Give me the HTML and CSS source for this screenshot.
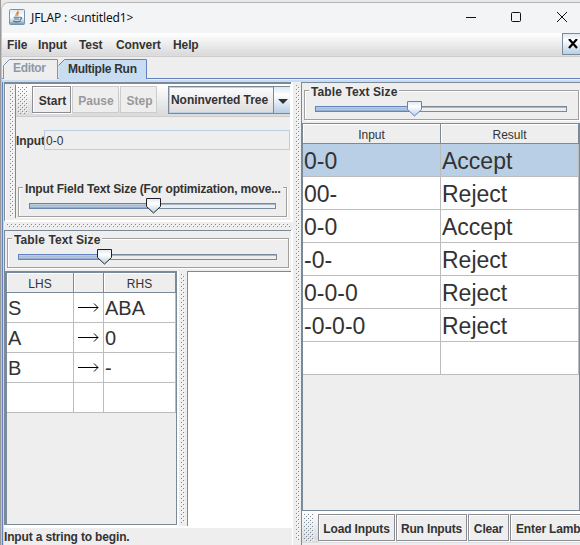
FILE: index.html
```html
<!DOCTYPE html>
<html lang="en">
<head>
<meta charset="utf-8">
<title>JFLAP : &lt;untitled1&gt;</title>
<link rel="stylesheet" href="styles.css">
</head>
<body>
<svg class="defs" width="0" height="0">
  <defs>
    <pattern id="grip" width="4" height="4" patternUnits="userSpaceOnUse">
      <path d="M1 1h1v1h-1zM3 3h1v1h-1z" fill="#fff"/>
      <path d="M0 0h1v1h-1zM2 2h1v1h-1z" fill="#7a8a99"/>
    </pattern>
    <linearGradient id="fill" x1="0" y1="0" x2="0" y2="1">
      <stop offset="0" stop-color="#e4eef8"/><stop offset=".35" stop-color="#a3b8cc"/><stop offset="1" stop-color="#c8ddf2"/>
    </linearGradient>
    <linearGradient id="knob" x1="0" y1="0" x2="0" y2="1">
      <stop offset="0" stop-color="#dde8f3"/><stop offset=".35" stop-color="#fff"/><stop offset="1" stop-color="#b8cfe5"/>
    </linearGradient>
  </defs>
</svg>
<div class="window">
  <header class="titlebar">
    <svg class="logo" width="16" height="16" viewBox="0 0 16 16">
      <defs><linearGradient id="lg" x1="0" y1="0" x2="0" y2="1"><stop offset="0" stop-color="#dce8f0"/><stop offset=".5" stop-color="#fff"/><stop offset=".8" stop-color="#b9cfdc"/><stop offset="1" stop-color="#6f8ea6"/></linearGradient></defs>
      <rect x=".5" y=".5" width="15" height="15" rx="1" fill="url(#lg)" stroke="#7890a8"/>
      <path d="M8.800 1.500c1 2-3 2.800-1.600 5.700M10.200 3.600c-2.200 1.200-2 1.800-1.200 3.500" fill="none" stroke="#e8843a" stroke-width="1.200"/>
      <path d="M4.500 8.300h6.300M5 10h5M4 12c2.500 1 6 .9 8-.2M11 8.300c2.500-.5 2 1.900-.2 2.200" fill="none" stroke="#48728f" stroke-width="1.100"/>
    </svg>
    <span class="caption">JFLAP : &lt;untitled1&gt;</span>
    <svg class="controls" width="120" height="30" viewBox="460 3 120 30" fill="none" stroke="#111">
      <path d="M466 17.500h10" stroke-width="1"/>
      <rect x="511.500" y="12.500" width="9" height="9" rx="1"/>
      <path d="M557 12l10 10M567 12l-10 10"/>
    </svg>
  </header>
  <nav class="menubar">
    <span class="m1">File</span><span class="m2">Input</span><span class="m3">Test</span><span class="m4">Convert</span><span class="m5">Help</span>
    <button class="close"><svg width="10" height="10" viewBox="0 0 10 10"><path d="M1 0l8 9M9 0l-8 9" stroke="#000" stroke-width="2.200"/></svg></button>
  </nav>
  <div class="tabs">
    <svg class="tab" width="55" height="20" viewBox="0 0 55 20"><path d="M.5 20V6.500L6.500.5H54.500V20" fill="#eee" stroke="#7b92bd"/><text x="10" y="13" fill="#8b98a8" class="tabtext" textLength="33">Editor</text></svg><svg class="tab" width="90" height="23" viewBox="0 0 90 23"><path d="M.5 23V6.500L6.500.5H88.500V23z" fill="#c8ddf2"/><path d="M.5 6.500L6.500.5H88.500V20" fill="none" stroke="#6382bf"/><text x="10" y="14" fill="#333" class="tabtext" textLength="69">Multiple Run</text></svg>
  </div>
  <main class="workspace">
    <section class="left">
      <div class="upper">
        <svg class="upper-grip" width="10" height="136"><svg x="4" y="3" width="4" height="130"><rect width="4" height="130" fill="url(#grip)"/></svg></svg>
        <div class="runner">
          <div class="toolbar">
            <svg class="bump" width="10" height="27"><rect width="10" height="27" fill="url(#grip)"/></svg>
            <button class="btn start">Start</button><button class="btn off pause">Pause</button><button class="btn off step">Step</button>
            <div class="combo"><span>Noninverted Tree</span><i><svg width="10" height="5"><path d="M0 0h10l-5 5z" fill="#333"/></svg></i></div>
          </div>
          <div class="field"><label>Input</label><div class="entry">0-0</div></div>
          <div class="group g1"><span class="legend">Input Field Text Size (For optimization, move...</span>
            <svg class="slider" width="248" height="16"><rect x=".5" y="5.500" width="246" height="5" fill="#eee" stroke="#7a8a99"/><rect x="1" y="6" width="245" height="1" fill="#a3b8cc"/><rect x=".5" y="5.500" width="120" height="4.500" fill="url(#fill)" stroke="#6382bf"/><path d="M117.500.5h14v8l-7 6.500-7-6.500z" fill="url(#knob)" stroke="#222"/></svg>
          </div>
        </div>
      </div>
      <svg class="hbar" width="289" height="8"><svg x="3" y="2" width="283" height="4"><rect width="283" height="4" fill="url(#grip)"/></svg></svg>
      <div class="grammar-head">
        <div class="group g2"><span class="legend">Table Text Size</span>
          <svg class="slider" width="260" height="16"><rect x=".5" y="5.500" width="258" height="5" fill="#eee" stroke="#7a8a99"/><rect x="1" y="6" width="257" height="1" fill="#a3b8cc"/><rect x=".5" y="5.500" width="82" height="4.500" fill="url(#fill)" stroke="#6382bf"/><path d="M79.500.5h14v8l-7 6.500-7-6.500z" fill="url(#knob)" stroke="#222"/></svg>
        </div>
      </div>
      <div class="lower">
        <div class="scroll-a">
          <div class="grid rules">
            <b>LHS</b><b></b><b>RHS</b>
            <span>S</span><span class="arrow"><svg width="23" height="11"><path d="M1 5.500h20M17 1.500l4 4-4 4" fill="none" stroke="#000"/></svg></span><span>ABA</span>
            <span>A</span><span class="arrow"><svg width="23" height="11"><path d="M1 5.500h20M17 1.500l4 4-4 4" fill="none" stroke="#000"/></svg></span><span>0</span>
            <span>B</span><span class="arrow"><svg width="23" height="11"><path d="M1 5.500h20M17 1.500l4 4-4 4" fill="none" stroke="#000"/></svg></span><span>-</span>
            <span></span><span></span><span></span>
          </div>
        </div>
        <svg class="lower-grip" width="8" height="255"><svg x="2" y="3" width="4" height="249"><rect width="4" height="249" fill="url(#grip)"/></svg></svg>
        <div class="canvas"></div>
      </div>
      <footer class="status">Input a string to begin.</footer>
    </section>
    <svg class="vbar" width="8" height="461"><svg x="3" y="3" width="4" height="455"><rect width="4" height="455" fill="url(#grip)"/></svg></svg>
    <section class="right">
      <div class="results-head">
        <div class="group g3"><span class="legend">Table Text Size</span>
          <svg class="slider" width="253" height="16"><rect x=".5" y="5.500" width="251" height="5" fill="#eee" stroke="#7a8a99"/><rect x="1" y="6" width="250" height="1" fill="#a3b8cc"/><rect x=".5" y="5.500" width="95" height="4.500" fill="url(#fill)" stroke="#6382bf"/><path d="M92.500.5h14v8l-7 6.500-7-6.500z" fill="url(#knob)" stroke="#6382bf"/></svg>
        </div>
      </div>
      <div class="scroll-b">
        <div class="grid results">
          <b>Input</b><b>Result</b>
          <span class="sel">0-0</span><span class="sel">Accept</span>
          <span>00-</span><span>Reject</span>
          <span>0-0</span><span>Accept</span>
          <span>-0-</span><span>Reject</span>
          <span>0-0-0</span><span>Reject</span>
          <span>-0-0-0</span><span>Reject</span>
          <span></span><span></span>
        </div>
      </div>
      <div class="actions">
        <svg class="bump" width="10" height="28"><rect width="10" height="28" fill="url(#grip)"/></svg>
        <button class="btn load">Load Inputs</button><button class="btn run">Run Inputs</button><button class="btn clear">Clear</button><button class="btn lambda">Enter Lamb</button>
      </div>
    </section>
  </main>
</div>
</body>
</html>
```
FILE: styles.css
```css
* { box-sizing: border-box; }
body { margin: 0; width: 580px; height: 545px; overflow: hidden; background: linear-gradient(90deg, #999 1px, #e9e9e9 1px); font: bold 12px/14px "Liberation Sans", sans-serif; color: #333; }
svg { display: block; flex: none; }
.defs { position: absolute; }
button { font: inherit; color: inherit; border-radius: 0; margin: 0; padding: 0; white-space: nowrap; flex: none; }
.window { margin: 2px 0 0 1px; width: 590px; height: 543px; border-top: 1px solid #b5b5b5; border-left: 1px solid #c2c5ca; border-radius: 8px 0 0 0; background: #eee; overflow: hidden; }
.titlebar { height: 30px; display: flex; background: #f3f4f6; padding-left: 7px; width: 578px; }
.logo { margin-top: 6px; }
.caption { font: 12px/30px "Noto Sans", sans-serif; color: #111; margin-left: 6px; letter-spacing: -0.12px; flex: 1; white-space: nowrap; }
.menubar { height: 24px; width: 578px; display: flex; line-height: 24px; background: linear-gradient(#fff, #dadada 22px, #eee 22px, #ccc 23px, #ccc); padding-left: 5px; letter-spacing: -0.1px; }
.m1 { width: 31px; } .m2 { width: 41px; } .m3 { width: 37px; } .m4 { width: 57px; } .m5 { flex: 1; }
.close { width: 18px; height: 22px; border: 1px solid #7a8a99; border-right: 0; background: linear-gradient(#dde8f3, #fff 30%, #b8cfe5); padding: 0 0 0 5px; }
.tabs { height: 25px; padding: 2px 0 0 1px; display: flex; background: linear-gradient(#eee 21px, #6382bf 21px, #6382bf 22px, #fff 22px, #c8ddf2 23px); }
.tabtext { font: bold 12px "Liberation Sans", sans-serif; }
.workspace { display: flex; width: 578px; height: 463px; border-left: 1px solid #6382bf; }
.left { width: 290px; flex: none; background: #fff; border-left: 1px solid #c8ddf2; }
.upper { height: 140px; display: flex; border-top: 2px solid #7a8a99; border-left: 1px solid #7a8a99; border-bottom: 2px solid #fff; width: 287px; background: #eee; }
.upper-grip { background: #eee; border-left: 1px solid #fff; }
.runner { width: 276px; height: 134px; border-left: 1px solid #7a8a99; border-top: 1px solid #fff; border-right: 1px solid #fff; }
.toolbar { display: flex; height: 32px; padding: 1px 0 0 2px; background: linear-gradient(#fff, #dadada 30px, #eee 30px, #ccc 31px); }
.toolbar .bump { margin-top: 1px; }
.btn { border: 1px solid #8c8c94; box-shadow: inset 1px 1px #fff, 1px 1px #fff; background: #eee; height: 27px; line-height: 25px; padding-top: 2px; }
.off { border-color: #ccc; color: #999; box-shadow: none; }
.start { width: 39px; margin: 0 1px 0 4px; padding-left: 2px; }
.pause { width: 47px; margin-right: 1px; padding-left: 1px; }
.step { width: 37px; padding-left: 2px; }
.combo { display: flex; width: 122px; height: 28px; margin-left: 11px; border: 1px solid #7a8a99; border-right: 0; box-shadow: inset 1px 1px #b8cfe5, inset 0 -1px #b8cfe5; line-height: 26px; }
.combo span { width: 105px; padding-left: 2px; border-right: 1px solid #7a8a99; white-space: nowrap; letter-spacing: -0.06px; }
.combo i { flex: 1; background: linear-gradient(#dde8f3, #fff 30%, #b8cfe5); padding: 12px 0 0 4px; }
.field { display: flex; height: 20px; margin-top: 13px; line-height: 22px; }
.field label { width: 28px; white-space: nowrap; letter-spacing: -0.1px; }
.entry { flex: 1; border: 1px solid #b8cfe5; font-weight: 400; line-height: 20px; padding-left: 1px; }
.group { border: 1px solid #a0a0a0; box-shadow: 1px 1px #fff, inset 1px 1px #fff; height: 30px; }
.legend { display: block; width: max-content; margin: -6px 0 0 4px; padding: 0 2px; background: #eee; white-space: nowrap; line-height: 14px; height: 13px; letter-spacing: 0.1px; }
.g1 { width: 269px; margin: 37px 0 0 2px; }
.g1 .legend { letter-spacing: -0.17px; }
.group .slider { margin: 3px 0 0 10px; }
.hbar { background: #eee; }
.grammar-head { height: 41px; border-top: 1px solid #7a8a99; border-left: 1px solid #7a8a99; background: #eee; padding: 7px 0 0 2px; width: 287px; }
.g2 { width: 282px; }
.lower { display: flex; height: 255px; }
.scroll-a { width: 173px; height: 254px; border: solid #7a8a99; border-width: 2px 1px 1px 3px; background: #eee; }
.grid { display: grid; background: #eee; }
.grid b { font-weight: 400; text-align: center; border-right: 1px solid #7a8a99; border-bottom: 1px solid #7a8a99; box-shadow: inset 1px 1px #fff; line-height: 22px; }
.grid span { border-right: 1px solid #bcbcbc; border-bottom: 1px solid #bcbcbc; background: #fff; font-weight: 400; padding-left: 1px; white-space: nowrap; }
.rules { grid-template-columns: 67px 30px 72px; grid-template-rows: 20px repeat(4, 30px); }
.rules span { font-size: 20px; line-height: 31px; }
.rules .arrow { padding: 9px 0 0 3px; }
.lower-grip { background: #eee; margin-left: 2px; }
.canvas { flex: 1; border-top: 1px solid #7a8a99; border-left: 1px solid #7a8a99; background: #fff; margin-right: 2px; }
.status { height: 17px; margin-top: 2px; width: 288px; background: #eee; line-height: 18px; letter-spacing: -0.16px; }
.vbar { background: #eee; }
.right { flex: 1; border-left: 1px solid #7a8a99; border-top: 1px solid #7a8a99; background: #eee; min-width: 0; }
.results-head { height: 40px; padding: 7px 0 0 2px; }
.g3 { width: 275px; }
.scroll-b { height: 388px; border: 1px solid #7a8a99; }
.results { grid-template-columns: 138px 138px; grid-template-rows: 20px repeat(7, 33px); }
.results span { font-size: 23px; line-height: 34px; }
.results .sel { background: #b8cfe5; }
.actions { display: flex; height: 32px; padding: 2px 0 0 2px; border-top: 1px solid #fff; background: linear-gradient(#fff, #dadada 28px, #eee 29px, #ccc 30px, #eee 31px); overflow: hidden; letter-spacing: -0.15px; }
.actions .btn { letter-spacing: -0.15px; }
.load { width: 77px; margin: 0 1px 0 4px; }
.run { width: 71px; margin-right: 1px; }
.clear { width: 41px; margin-right: 1px; }
.lambda { width: 90px; text-align: left; padding-left: 5px; }
```
